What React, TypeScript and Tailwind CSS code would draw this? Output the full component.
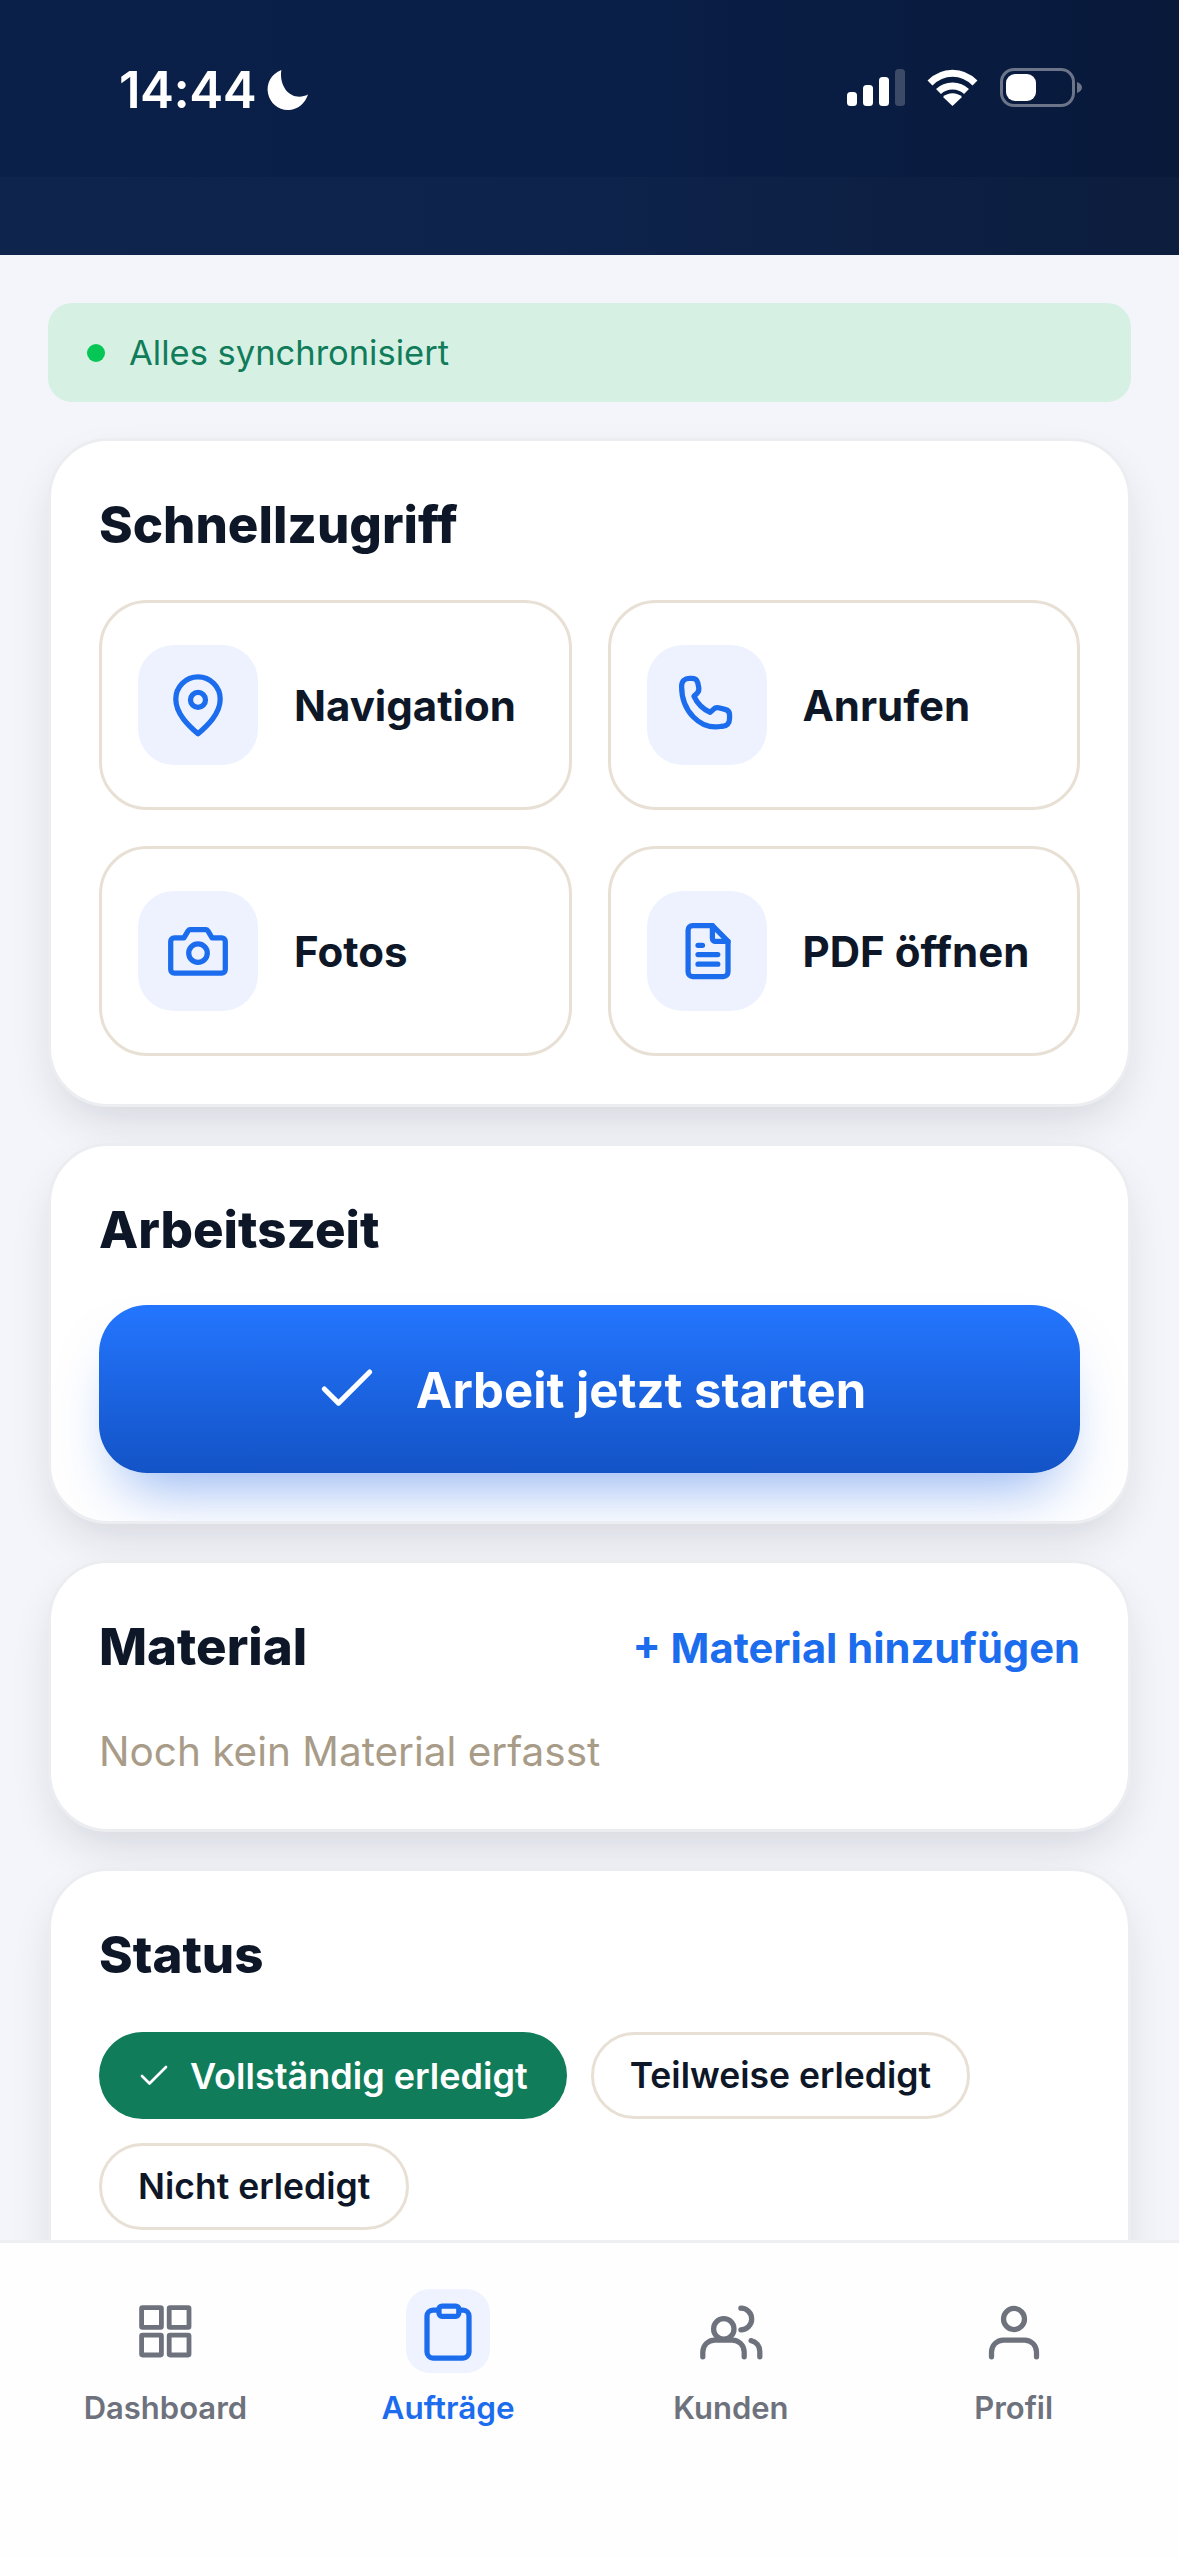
import React from "react";
import { Check } from "lucide-react";

const stroke = { fill: "none", stroke: "currentColor", strokeWidth: 1.75, strokeLinecap: "round", strokeLinejoin: "round" } as const;

function Pin() {
  return (
    <svg viewBox="0 0 24 24" className="h-[72px] w-[72px]" {...stroke}>
      <path d="M12 21.6C9 19 4.6 15 4.6 10A7.4 7.4 0 0 1 19.4 10C19.4 15 15 19 12 21.6Z" />
      <circle cx="12" cy="10.3" r="2.5" />
    </svg>
  );
}
function Phone() {
  return (
    <svg viewBox="0 0 24 24" className="h-[72px] w-[72px]" {...stroke} strokeWidth={1.62}>
      <path transform="translate(-1 -0.9) scale(1.08)" d="M4.200 6.200c0-1.600 1-2.500 2.400-2.500h.9c.9 0 1.500.5 1.700 1.400l.3 1.500c.1.700 0 1.200-.5 1.700l-1 .9c1 2.200 2.800 4 5 5l1.100-1c.4-.4.9-.5 1.500-.4l2 .5c.9.2 1.400.9 1.400 1.700v1.200c0 1.400-.9 2.400-2.400 2.300C9.800 19.900 4.200 13.600 4.200 6.200Z" />
    </svg>
  );
}
function Camera() {
  return (
    <svg viewBox="0 0 24 24" className="h-[72px] w-[72px]" {...stroke}>
      <path d="M4.100 7.600H7.300L8.700 5.300C8.900 5 9.100 4.900 9.400 4.900H14.600C14.900 4.900 15.100 5 15.300 5.300L16.700 7.600H19.900A1.200 1.200 0 0 1 21.100 8.800V18.200A1.200 1.200 0 0 1 19.900 19.400H4.100A1.200 1.200 0 0 1 2.900 18.200V8.800A1.200 1.200 0 0 1 4.100 7.600Z" />
      <circle cx="12" cy="12.700" r="3.100" />
    </svg>
  );
}
function Doc() {
  return (
    <svg viewBox="0 0 24 24" className="h-[72px] w-[72px]" {...stroke}>
      <path d="M7.200 3.500H13.800L19 8.800V19A1.500 1.500 0 0 1 17.500 20.500H7.200A1.500 1.500 0 0 1 5.700 19V5A1.500 1.500 0 0 1 7.200 3.500Z" />
      <path d="M13.800 3.500V7.800A1 1 0 0 0 14.800 8.800H19" />
      <path d="M9 10.100H10.500M9 13.200H15.600M9 16.400H15.600" />
    </svg>
  );
}
function Grid() {
  return (
    <svg viewBox="0 0 24 24" className="h-[72px] w-[72px]" fill="none" stroke="currentColor" strokeWidth="1.6" strokeLinejoin="round">
      <rect x="4.200" y="4.200" width="6.600" height="6.600" rx="0.300" />
      <rect x="13.400" y="4.200" width="6.600" height="6.600" rx="0.300" />
      <rect x="4.200" y="13.400" width="6.600" height="6.600" rx="0.300" />
      <rect x="13.400" y="13.400" width="6.600" height="6.600" rx="0.300" />
    </svg>
  );
}
function Clipboard() {
  return (
    <svg viewBox="0 0 24 24" className="h-[72px] w-[72px]" {...stroke}>
      <rect x="5" y="5" width="14" height="16" rx="2" />
      <rect x="9" y="3.700" width="6.600" height="3.400" rx="1" fill="#eef3ff" />
    </svg>
  );
}
function Users() {
  return (
    <svg viewBox="0 0 24 24" className="h-[72px] w-[72px]" {...stroke}>
      <circle cx="9.600" cy="11.300" r="3.400" />
      <path d="M2.600 20.600V19A4 4 0 0 1 6.600 15H12.400A4 4 0 0 1 16.400 19V20.600" />
      <path d="M15.300 4.400A3.600 3.600 0 0 1 15.300 11.600" />
      <path d="M18.700 15.200A3.600 3.600 0 0 1 21.600 18.800V20.600" />
    </svg>
  );
}
function User() {
  return (
    <svg viewBox="0 0 24 24" className="h-[72px] w-[72px]" {...stroke}>
      <circle cx="12" cy="8" r="3.500" />
      <path d="M4.500 20.600V19A4 4 0 0 1 8.500 15H15.500A4 4 0 0 1 19.500 19V20.600" />
    </svg>
  );
}

function StatusBar() {
  return (
    <div className="flex h-[177px] items-start justify-between pl-[119px] pr-[97px] pt-[68px] text-white">
      <div className="flex items-center gap-[10px]">
        <span className="text-[51px] font-semibold leading-[40px] tracking-[-0.5px]">14:44</span>
        <svg viewBox="0 0 41 40" className="mt-[2px] h-[41px] w-[42px]" fill="white">
          <path d="M15 0C5 4 0 13 2 23C4 33 13 40 23 39C31 38.500 38 33 41 24C33 28 24 26 19 19C15 13 14 6 15 0Z" />
        </svg>
      </div>
      <div className="flex items-start">
        <svg viewBox="0 0 58 37" className="mt-[1px] h-[37px] w-[58px]">
          <rect x="0" y="23" width="10" height="14" rx="3.500" fill="white" />
          <rect x="16" y="16" width="10" height="21" rx="3.500" fill="white" />
          <rect x="32" y="8" width="10" height="29" rx="3.500" fill="white" />
          <rect x="48" y="0" width="10" height="37" rx="3.500" fill="#3c4a68" />
        </svg>
        <svg viewBox="0 0 51 37" className="ml-[22px] mt-[1px] h-[37px] w-[51px]" fill="none" stroke="white" strokeWidth="7">
          <path d="M3 14C16 1 35 1 48 14" />
          <path d="M11.500 22.500C19 15 32 15 39.500 22.500" />
          <path d="M25.500 37L16 28C21 23 30 23 35 28Z" fill="white" stroke="none" />
        </svg>
        <div className="ml-[22px] flex items-center">
          <div className="flex h-[39px] w-[75px] items-center rounded-[14px] border-[3px] border-[#6b7488] pl-[3px]">
            <div className="h-[27px] w-[30px] rounded-[9px] bg-white" />
          </div>
          <svg viewBox="0 0 5 11" className="ml-[2px] h-[11px] w-[5px]" fill="#6b7488">
            <path d="M0 0C3 1 5 3 5 5.500C5 8 3 10 0 11Z" />
          </svg>
        </div>
      </div>
    </div>
  );
}

function Card({ children, clip }: { children: React.ReactNode; clip?: boolean }) {
  return (
    <section className={`rounded-[60px] border-[3px] border-[#ecedf0] bg-white p-[48px] shadow-[0_20px_48px_-12px_rgba(15,23,42,0.16)] ${clip ? "overflow-hidden" : ""}`}>
      {children}
    </section>
  );
}

function Title({ children }: { children: React.ReactNode }) {
  return <h2 className="pb-[3px] text-[51px] font-extrabold leading-[72px] text-[#0d1728]">{children}</h2>;
}

function Action({ icon, label }: { icon: React.ReactNode; label: string }) {
  return (
    <div className="flex h-[210px] items-center gap-[36px] rounded-[48px] border-[3px] border-[#e8e0d4] bg-white pl-[36px]">
      <div className="flex h-[120px] w-[120px] items-center justify-center rounded-[36px] bg-[#edf2fe] text-[#1c6cee]">{icon}</div>
      <span className="text-[42px] font-bold text-[#0d1728]">{label}</span>
    </div>
  );
}

function Chip({ label, active }: { label: string; active?: boolean }) {
  return active ? (
    <div className="flex h-[87px] items-center gap-[18px] rounded-full bg-[#107c5a] pl-[37px] pr-[39px] text-white">
      <Check className="h-[36px] w-[36px]" strokeWidth={1.8} />
      <span className="text-[36px] font-semibold">{label}</span>
    </div>
  ) : (
    <div className="flex h-[87px] items-center rounded-full border-[3px] border-[#e8e0d4] bg-white px-[36px] text-[#0d1728]">
      <span className="text-[35.5px] font-semibold">{label}</span>
    </div>
  );
}

function NavItem({ icon, label, active }: { icon: React.ReactNode; label: string; active?: boolean }) {
  return (
    <div className={`flex flex-col items-center ${active ? "text-[#1c6cee]" : "text-[#6e727d]"}`}>
      <div className={`flex h-[84px] w-[84px] items-center justify-center rounded-[24px] ${active ? "bg-[#eef3ff]" : ""}`}>{icon}</div>
      <span className={`mt-[12px] font-semibold leading-[46px] ${active ? "text-[31.5px]" : "text-[31px]"}`}>{label}</span>
    </div>
  );
}

export default function App() {
  return (
    <div className="flex h-[2556px] w-[1179px] flex-col overflow-hidden bg-[#f4f5fa] font-['Inter',sans-serif]">
      <header className="h-[255px] shrink-0 bg-gradient-to-r from-[#0b2049] via-[#0a1f48] to-[#08193a]">
        <StatusBar />
        <div className="h-[78px] bg-[#ffffff05]" />
      </header>

      <main className="flex min-h-0 flex-1 flex-col gap-[36px] overflow-hidden px-[48px] pt-[48px]">
        <div className="flex h-[99px] shrink-0 items-center gap-[24px] rounded-[24px] bg-[#d6f0e3] pl-[39px]">
          <span className="h-[18px] w-[18px] rounded-full bg-[#06c755]" />
          <span className="text-[34.5px] text-[#107c5a]">Alles synchronisiert</span>
        </div>

        <div className="shrink-0">
          <Card>
            <Title>Schnellzugriff</Title>
            <div className="mt-[36px] grid grid-cols-2 gap-[36px]">
              <Action icon={<Pin />} label="Navigation" />
              <Action icon={<Phone />} label="Anrufen" />
              <Action icon={<Camera />} label="Fotos" />
              <Action icon={<Doc />} label="PDF öffnen" />
            </div>
          </Card>
        </div>

        <div className="shrink-0">
          <Card clip>
            <Title>Arbeitszeit</Title>
            <div className="mt-[36px] flex h-[168px] items-center justify-center gap-[35px] rounded-[48px] bg-gradient-to-b from-[#2476ff] to-[#1353c6] text-white shadow-[0_36px_60px_-24px_rgba(28,100,230,0.5)]">
              <Check className="h-[68px] w-[68px]" strokeWidth={1.8} />
              <span className="mt-[3px] text-[49px] font-bold">Arbeit jetzt starten</span>
            </div>
          </Card>
        </div>

        <div className="shrink-0">
          <Card>
            <div className="flex items-center justify-between">
              <Title>Material</Title>
              <span className="text-[41.7px] font-bold text-[#1c6cee]">+ Material hinzufügen</span>
            </div>
            <p className="mt-[36px] text-[40.5px] leading-[59px] text-[#a89c88]">Noch kein Material erfasst</p>
          </Card>
        </div>

        <div className="shrink-0">
          <Card>
            <Title>Status</Title>
            <div className="mt-[38px] flex flex-wrap gap-x-[24px] gap-y-[24px] pb-[60px]">
              <Chip label="Vollständig erledigt" active />
              <Chip label="Teilweise erledigt" />
              <Chip label="Nicht erledigt" />
            </div>
          </Card>
        </div>
      </main>

      <nav className="grid h-[316px] shrink-0 grid-cols-4 border-t-[3px] border-[#eeeff2] bg-[#fefefe] px-[24px] pt-[46px]">
        <NavItem icon={<Grid />} label="Dashboard" />
        <NavItem icon={<Clipboard />} label="Aufträge" active />
        <NavItem icon={<Users />} label="Kunden" />
        <NavItem icon={<User />} label="Profil" />
      </nav>
    </div>
  );
}
